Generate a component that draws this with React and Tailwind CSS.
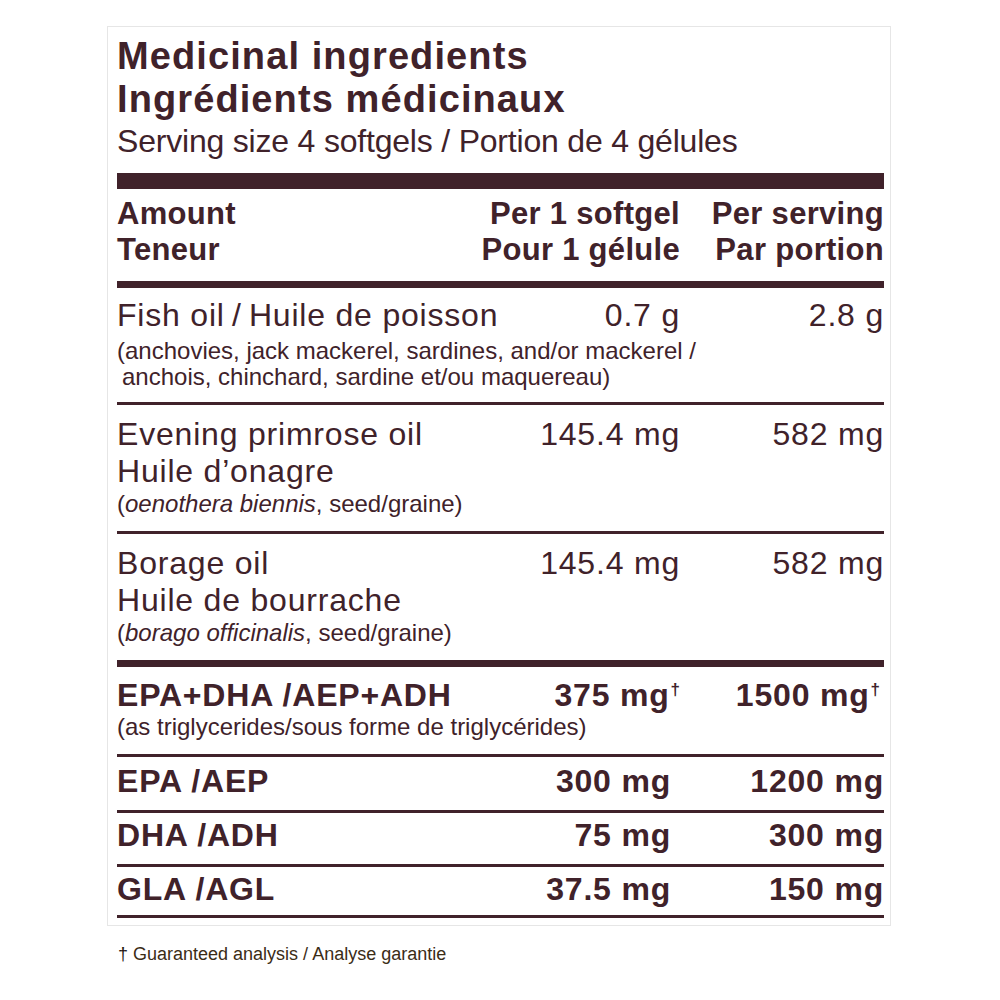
import React from "react";

const Dagger = () => (
  <span className="relative -top-[11px] ml-[1px] text-[17px] leading-none tracking-normal">†</span>
);

function Values({ a, b, mid = "w-[170px]", right = "w-[204px]" }) {
  return (
    <>
      <div className={`${mid} shrink-0 whitespace-nowrap text-right`}>{a}</div>
      <div className={`${right} shrink-0 whitespace-nowrap text-right`}>{b}</div>
    </>
  );
}

function Sub({ children, className = "" }) {
  return (
    <div className={`text-[24px] leading-[26px] tracking-normal whitespace-nowrap ${className}`}>
      {children}
    </div>
  );
}

export default function App() {
  return (
    <div className="min-h-screen bg-white font-['Liberation_Sans',Arial,sans-serif] text-[#40222a]">
      <div className="pl-[107px] pt-[26px]">
        <div className="w-[784px] border border-[#e6e6e6] pl-[9px] pr-[6px] pt-[8px] pb-[7px]">
          <h1 className="text-[38px] font-bold leading-[43px] tracking-[1.1px]">
            Medicinal ingredients
            <br />
            Ingrédients médicinaux
          </h1>
          <p className="text-[32px] leading-[40px] tracking-[-0.2px]">
            Serving size 4 softgels / Portion de 4 gélules
          </p>

          <div className="mt-[12px] h-[16px] bg-[#40222a]" />

          {/* header */}
          <div className="flex pt-[7px] pb-[13px] text-[31px] font-bold leading-[36px] tracking-[0.3px]">
            <div className="flex-1 whitespace-nowrap">
              Amount
              <br />
              Teneur
            </div>
            <Values
              mid="w-[220px]"
              a={
                <>
                  Per 1 softgel
                  <br />
                  Pour 1 gélule
                </>
              }
              b={
                <>
                  Per serving
                  <br />
                  Par portion
                </>
              }
            />
          </div>
          <div className="h-[7px] bg-[#40222a]" />

          {/* fish oil */}
          <div className="border-b-[3px] border-[#40222a] pt-[9px] pb-[12px]">
            <div className="flex text-[32px] leading-[36px] tracking-[0.8px]">
              <div className="flex-1 whitespace-nowrap">Fish oil{"\u2009"}/{"\u2009"}Huile de poisson</div>
              <Values a="0.7 g" b="2.8 g" />
            </div>
            <Sub className="mt-[5px]">(anchovies, jack mackerel, sardines, and/or mackerel /</Sub>
            <Sub className="pl-[5px]">anchois, chinchard, sardine et/ou maquereau)</Sub>
          </div>

          {/* evening primrose */}
          <div className="border-b-[3px] border-[#40222a] pt-[11px] pb-[14px]">
            <div className="flex text-[32px] leading-[37px] tracking-[0.8px]">
              <div className="flex-1 whitespace-nowrap">
                Evening primrose oil
                <br />
                Huile d’onagre
              </div>
              <Values a="145.4 mg" b="582 mg" />
            </div>
            <Sub className="mt-[1px]">
              (<i>oenothera biennis</i>, seed/graine)
            </Sub>
          </div>

          {/* borage */}
          <div className="border-b-[7px] border-[#40222a] pt-[11px] pb-[14px]">
            <div className="flex text-[32px] leading-[37px] tracking-[0.8px]">
              <div className="flex-1 whitespace-nowrap">
                Borage oil
                <br />
                Huile de bourrache
              </div>
              <Values a="145.4 mg" b="582 mg" />
            </div>
            <Sub className="mt-[1px]">
              (<i>borago officinalis</i>, seed/graine)
            </Sub>
          </div>

          {/* EPA+DHA */}
          <div className="border-b-[3px] border-[#40222a] pt-[10px] pb-[14px]">
            <div className="flex text-[32px] font-bold leading-[36px] tracking-[0.8px]">
              <div className="flex-1 whitespace-nowrap">EPA+DHA /AEP+ADH</div>
              <Values
                right="w-[204px] pr-[4px]"
                a={
                  <>
                    375 mg
                    <Dagger />
                  </>
                }
                b={
                  <>
                    1500 mg
                    <Dagger />
                  </>
                }
              />
            </div>
            <Sub className="mt-[1px]">(as triglycerides/sous forme de triglycérides)</Sub>
          </div>

          <div className="flex border-b-[3px] border-[#40222a] pt-[6px] pb-[11px] text-[32px] font-bold leading-[36px] tracking-[0.8px]">
            <div className="flex-1 whitespace-nowrap">EPA /AEP</div>
            <Values mid="w-[170px] pr-[9px]" a="300 mg" b="1200 mg" />
          </div>
          <div className="flex border-b-[3px] border-[#40222a] pt-[4px] pb-[11px] text-[32px] font-bold leading-[36px] tracking-[0.8px]">
            <div className="flex-1 whitespace-nowrap">DHA /ADH</div>
            <Values mid="w-[170px] pr-[9px]" a="75 mg" b="300 mg" />
          </div>
          <div className="flex border-b-[3px] border-[#40222a] pt-[4px] pb-[8px] text-[32px] font-bold leading-[36px] tracking-[0.8px]">
            <div className="flex-1 whitespace-nowrap">GLA /AGL</div>
            <Values mid="w-[170px] pr-[9px]" a="37.5 mg" b="150 mg" />
          </div>
        </div>

        <p className="mt-[17px] pl-[11px] text-[18px] leading-[22px] text-[#3b2c16]">
          <span className="text-[#24160e]">†</span> Guaranteed analysis / Analyse garantie
        </p>
      </div>
    </div>
  );
}
